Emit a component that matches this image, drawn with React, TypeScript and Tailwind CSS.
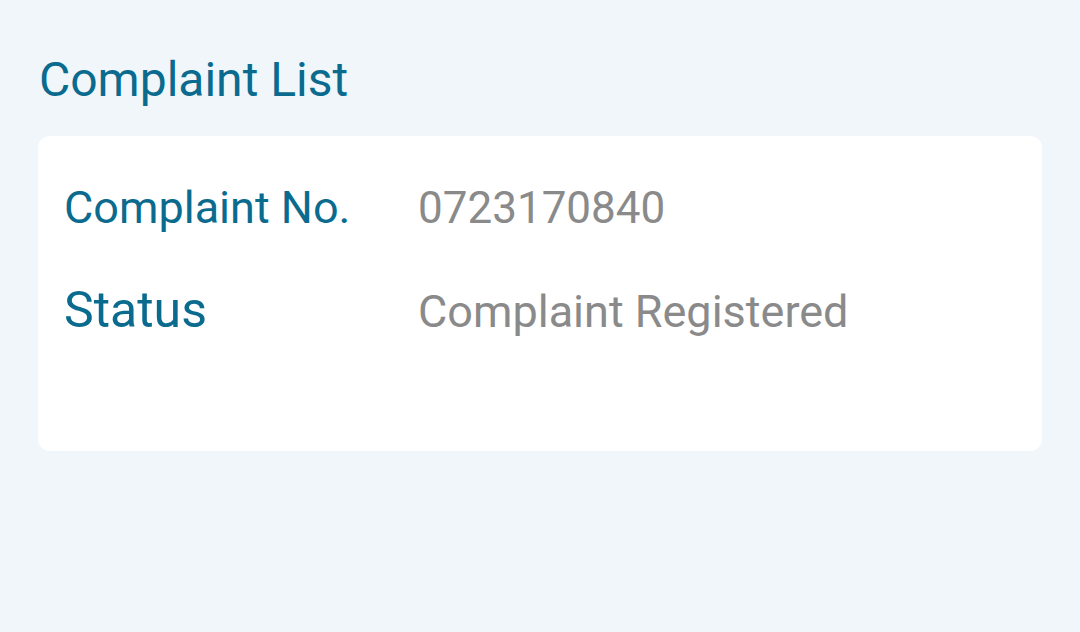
export default function App() {
  return (
    <div className="w-[1080px] h-[632px] bg-[#f1f6fb] px-[38px] pt-[52px]" style={{ fontFamily: "Roboto, sans-serif" }}>
      <h1 className="text-[48px] leading-[56px] text-[#0a6b8f] pl-[1px]">Complaint List</h1>
      <div className="mt-[28px] w-[1004px] h-[315px] bg-white rounded-[12px] pl-[26px] pt-[42px]">
        <div className="flex items-baseline">
          <div className="w-[354px] text-[45px] leading-[60px] text-[#0a6b8f]">Complaint No.</div>
          <div className="text-[44px] leading-[60px] text-[#8a8a8a]">0723170840</div>
        </div>
        <div className="flex items-baseline mt-[42px]">
          <div className="w-[354px] text-[50px] leading-[60px] text-[#0a6b8f]">Status</div>
          <div className="text-[45px] leading-[60px] text-[#8a8a8a]">Complaint Registered</div>
        </div>
      </div>
    </div>
  );
}
